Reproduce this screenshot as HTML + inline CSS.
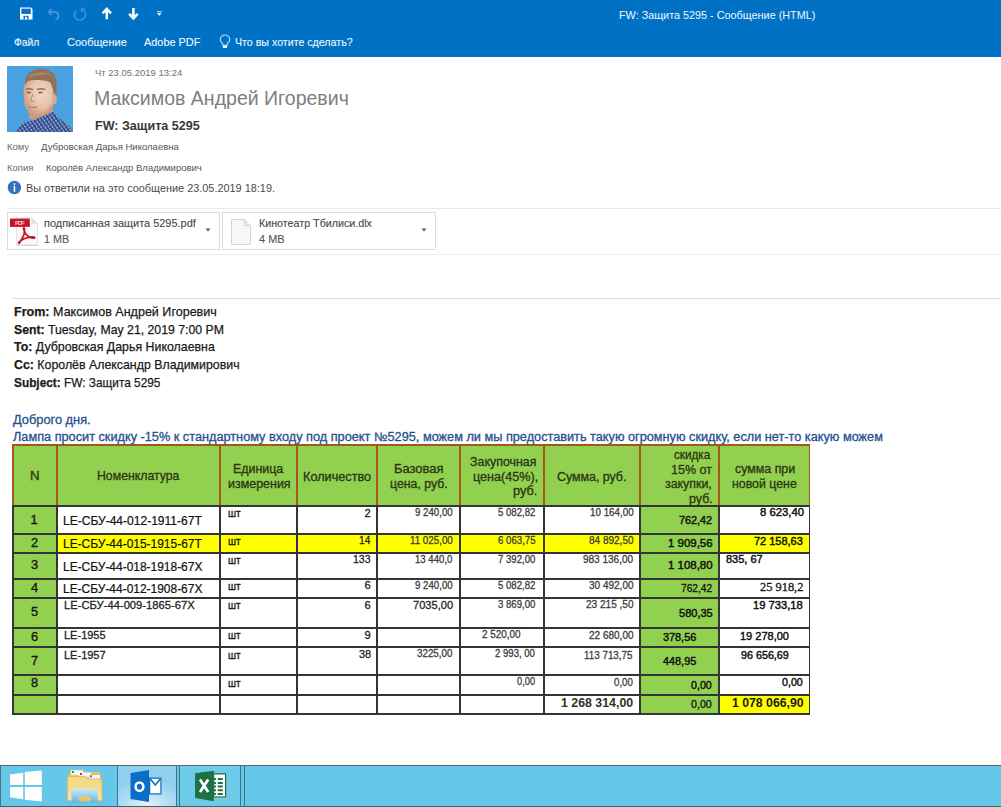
<!DOCTYPE html>
<html><head><meta charset="utf-8"><title>FW: Защита 5295</title>
<style>
html,body{margin:0;padding:0}
body{width:1001px;height:807px;overflow:hidden;position:relative;background:#ffffff;font-family:"Liberation Sans",sans-serif}
.r{position:absolute;box-sizing:content-box}
.t{position:absolute;white-space:nowrap;transform-origin:0 0}
</style></head><body>
<div class="r" style="left:0;top:0;width:1001px;height:57px;background:#0072c6"></div>
<svg class="r" style="left:0;top:0" width="180" height="28" viewBox="0 0 180 28">
<path d="M20 7.5 H31 L32.5 9 V19.5 H20 Z" fill="#ffffff"/>
<rect x="21.4" y="8.6" width="9.4" height="5.4" fill="#0a72c8"/>
<rect x="23.5" y="15.8" width="5" height="3.7" fill="#0a72c8"/>
<rect x="25" y="16.8" width="2" height="2.7" fill="#ffffff"/>
<path d="M48.5 12 L51.5 9 M48.5 12 L51.5 15 M48.5 12 H54 C57 12 58.5 14 58.5 16 C58.5 18 57 19 55.5 19.5" stroke="#4592dc" stroke-width="1.8" fill="none"/>
<path d="M76.5 11 C74.5 12.5 74 14.5 74.5 16 C75.5 19 78 20 80 20 C83 20 85.5 17.5 85.5 14.5 C85.5 11.5 83.5 9.5 81 9 M81 9 L84.5 8.2 M81 9 L82.3 12" stroke="#3f8cd8" stroke-width="1.7" fill="none"/>
<path d="M106.8 19.3 V9.5 M102.6 13.4 L106.8 8.9 L111 13.4" stroke="#ffffff" stroke-width="2.5" fill="none"/>
<path d="M133.4 8 V17.8 M129.2 13.9 L133.4 18.4 L137.6 13.9" stroke="#ffffff" stroke-width="2.5" fill="none"/>
<rect x="157" y="11.3" width="4.6" height="0.9" fill="#ffffff"/>
<path d="M157 13.2 H161.6 L159.3 15.8 Z" fill="#ffffff"/>
</svg>
<svg class="r" style="left:218px;top:34px" width="14" height="16" viewBox="0 0 14 16">
<path d="M5 11.3 L4.6 9.6 C3.2 8.6 2.3 7.2 2.3 5.6 C2.3 3 4.4 1 7 1 C9.6 1 11.7 3 11.7 5.6 C11.7 7.2 10.8 8.6 9.4 9.6 L9 11.3 Z" stroke="#b4d8f6" stroke-width="1.2" fill="none"/>
<rect x="4.9" y="11.8" width="4.2" height="2.1" fill="#ffffff"/>
</svg>
<svg class="r" style="left:7px;top:66px" width="66" height="66" viewBox="0 0 66 66">
<defs>
<radialGradient id="fg" cx="0.6" cy="0.4" r="0.65"><stop offset="0" stop-color="#f0d8c8"/><stop offset="0.6" stop-color="#e6c2aa"/><stop offset="1" stop-color="#c9987c"/></radialGradient>
<pattern id="chk" width="3.2" height="3.2" patternUnits="userSpaceOnUse" patternTransform="rotate(-35)"><rect width="3.2" height="3.2" fill="#9fb4dc"/><rect width="1.7" height="3.2" fill="#243f82" opacity="0.9"/><rect width="3.2" height="1.7" fill="#34508f" opacity="0.7"/></pattern>
</defs>
<rect width="66" height="66" fill="#4aa3e0"/>
<path d="M21 38 L22 52 C28 56 38 55 46 47 L46 36 Z" fill="#c99a80"/>
<path d="M9 66 C12 60 16 57 21 55.6 C27 54 31 52 35 50.7 C39 49 43 47 45.8 45.8 C49 48 51 50 52 52 C56 55 60 58 63 61 L66 66 Z" fill="url(#chk)"/>
<path d="M17 20 C18 14 24 12 32 12.5 C40 13 46 16 46 24 L46 34 C45 42 40 47 33 48.5 C27 49.5 22 46 19 41 C17 37 16.5 30 17 20 Z" fill="url(#fg)"/>
<path d="M17 22 C17 32 17.5 38 20 42 C22 45 25 47.5 27 48.5 C22 47 18.5 43 17.2 38 C16.5 33 16.5 27 17 22 Z" fill="#d2a88e" opacity="0.8"/>
<path d="M19 23.5 C21 22.5 24 22.8 26 23.7 M30 23.5 C32.5 22.5 36 22.5 38.5 23.8" stroke="#8a6450" stroke-width="1.4" fill="none" opacity="0.9"/>
<ellipse cx="22" cy="26.5" rx="2.3" ry="1.1" fill="#7a5646" opacity="0.85"/><ellipse cx="33.5" cy="26.5" rx="2.5" ry="1.1" fill="#7a5646" opacity="0.85"/>
<path d="M26 28 C25 31 23.5 33 24 35 C25.5 35.5 27 35.3 28 35" stroke="#c0907a" stroke-width="1.2" fill="none"/>
<path d="M21 41 C24 41.5 27 41.5 30 40.8" stroke="#b07a66" stroke-width="1.2" fill="none"/>
<path d="M45 27 C49 26 50.5 30 49.5 35 C49 38 47 39 45 38.5 Z" fill="#d9ad92"/>
<path d="M18 19 C17 10 24 3 34 2.5 C43 2.5 49 8 49.5 16 L49.5 31 C47 27 45 21 43.5 16.5 C40 14 28 13 21 15 C19.5 16 18.5 18 18 19 Z" fill="#927256"/>
<path d="M22 10 C28 5 40 5 46 10 C40 8 30 8 22 12 Z" fill="#a88a6c" opacity="0.8"/>
</svg>
<svg class="r" style="left:7px;top:180px" width="16" height="16" viewBox="0 0 16 16">
<circle cx="7.4" cy="7.5" r="6.7" fill="#3573b9"/>
<rect x="6.7" y="5.8" width="1.5" height="6" fill="#fff"/><rect x="6.7" y="3.3" width="1.5" height="1.6" fill="#fff"/>
</svg>
<div class="r" style="left:7px;top:208px;width:994px;height:1px;background:#e9e9e9"></div>
<div class="r" style="left:7px;top:212px;width:211px;height:36px;border:1px solid #dcdcdc"></div>
<div class="r" style="left:222px;top:212px;width:212px;height:36px;border:1px solid #dcdcdc"></div>
<div class="r" style="left:7px;top:254px;width:994px;height:1px;background:#ececec"></div>
<svg class="r" style="left:9px;top:216px" width="30" height="30" viewBox="0 0 30 30">
<path d="M7.5 1.8 H22.5 L28.5 7.8 V29.5 H7.5 Z" fill="#f9f9f9" stroke="#dadada" stroke-width="0.8"/>
<path d="M22.5 1.8 V7.8 H28.5 Z" fill="#e0e0e0"/>
<path d="M8 29.2 H28.5" stroke="#c8c8c8" stroke-width="0.8"/>
<rect x="1" y="2.6" width="19.8" height="8.3" fill="#c5142a"/>
<text x="10.9" y="9.2" font-family="Liberation Sans" font-size="6.2" font-weight="700" fill="#f4c4c4" text-anchor="middle" textLength="10">PDF</text>
<path d="M14.8 11.8 C15.8 11.8 15.8 16 14.8 19 C13.3 23 11 26 10.3 27 C9.7 27.8 9.2 26.8 10.3 25.8 C13 23.5 18 21 23.5 20.8 C26.5 20.8 26.5 22.6 23.5 22.1 C19.5 21.2 16.3 18 15.3 15 C14.5 13 14.3 11.8 14.8 11.8 Z" fill="none" stroke="#c5142a" stroke-width="1.8"/>
</svg>
<svg class="r" style="left:228px;top:216px" width="26" height="30" viewBox="0 0 26 30">
<path d="M3.5 3.5 H16.5 L22.5 9.5 V28.5 H3.5 Z" fill="#f7f7f7" stroke="#cfcfcf" stroke-width="0.9"/>
<path d="M16.5 3.5 V9.5 H22.5" fill="#ececec" stroke="#cfcfcf" stroke-width="0.9"/>
</svg>
<svg class="r" style="left:205px;top:228px" width="6" height="4"><path d="M0.5 0.5 H5.5 L3 3.5 Z" fill="#555"/></svg>
<svg class="r" style="left:421px;top:228px" width="6" height="4"><path d="M0.5 0.5 H5.5 L3 3.5 Z" fill="#555"/></svg>
<div class="r" style="left:13px;top:298px;width:988px;height:1px;background:#dddddd"></div>
<div class="r" style="left:12px;top:444px;width:798px;height:270px;background:#ffffff;"></div>
<div class="r" style="left:12px;top:444px;width:798px;height:62px;background:#92d050;"></div>
<div class="r" style="left:12px;top:505px;width:44px;height:209px;background:#92d050;"></div>
<div class="r" style="left:639px;top:505px;width:79px;height:209px;background:#92d050;"></div>
<div class="r" style="left:56px;top:534px;width:583px;height:19px;background:#ffff00;"></div>
<div class="r" style="left:718px;top:534px;width:91px;height:19px;background:#ffff00;"></div>
<div class="r" style="left:718px;top:694px;width:91px;height:20px;background:#ffff00;"></div>
<div class="r" style="left:12px;top:444px;width:798px;height:2px;background:#a5561a;"></div>
<div class="r" style="left:12px;top:444px;width:1.5px;height:62px;background:#a5561a;"></div>
<div class="r" style="left:55.5px;top:444px;width:2px;height:62px;background:#a5561a;"></div>
<div class="r" style="left:219px;top:444px;width:2px;height:62px;background:#a5561a;"></div>
<div class="r" style="left:295.5px;top:444px;width:2px;height:62px;background:#a5561a;"></div>
<div class="r" style="left:376px;top:444px;width:2px;height:62px;background:#a5561a;"></div>
<div class="r" style="left:458.5px;top:444px;width:2px;height:62px;background:#a5561a;"></div>
<div class="r" style="left:542.5px;top:444px;width:2px;height:62px;background:#a5561a;"></div>
<div class="r" style="left:638.5px;top:444px;width:2px;height:62px;background:#a5561a;"></div>
<div class="r" style="left:717.5px;top:444px;width:2px;height:62px;background:#a5561a;"></div>
<div class="r" style="left:808.5px;top:444px;width:1.5px;height:62px;background:#a5561a;"></div>
<div class="r" style="left:12px;top:505px;width:798px;height:2px;background:#353535;"></div>
<div class="r" style="left:12px;top:533px;width:798px;height:2px;background:#353535;"></div>
<div class="r" style="left:12px;top:551.5px;width:798px;height:2px;background:#353535;"></div>
<div class="r" style="left:12px;top:577.5px;width:798px;height:2px;background:#353535;"></div>
<div class="r" style="left:12px;top:597px;width:798px;height:2px;background:#353535;"></div>
<div class="r" style="left:12px;top:627px;width:798px;height:2px;background:#353535;"></div>
<div class="r" style="left:12px;top:646px;width:798px;height:2px;background:#353535;"></div>
<div class="r" style="left:12px;top:674px;width:798px;height:2px;background:#353535;"></div>
<div class="r" style="left:12px;top:693.5px;width:798px;height:2px;background:#353535;"></div>
<div class="r" style="left:12px;top:713px;width:798px;height:2px;background:#353535;"></div>
<div class="r" style="left:12px;top:505px;width:1.5px;height:210px;background:#353535;"></div>
<div class="r" style="left:55.5px;top:505px;width:2px;height:210px;background:#353535;"></div>
<div class="r" style="left:219px;top:505px;width:2px;height:210px;background:#353535;"></div>
<div class="r" style="left:295.5px;top:505px;width:2px;height:210px;background:#353535;"></div>
<div class="r" style="left:376px;top:505px;width:2px;height:210px;background:#353535;"></div>
<div class="r" style="left:458.5px;top:505px;width:2px;height:210px;background:#353535;"></div>
<div class="r" style="left:542.5px;top:505px;width:2px;height:210px;background:#353535;"></div>
<div class="r" style="left:638.5px;top:505px;width:2px;height:210px;background:#353535;"></div>
<div class="r" style="left:717.5px;top:505px;width:2px;height:210px;background:#353535;"></div>
<div class="r" style="left:808.5px;top:505px;width:1.5px;height:210px;background:#353535;"></div>
<div class="r" style="left:0;top:765px;width:1001px;height:42px;background:#65c8e8"></div>
<div class="r" style="left:0;top:765px;width:1001px;height:1px;background:#5a6a72"></div>
<div class="r" style="left:0;top:766px;width:1px;height:41px;background:#4f6f7d"></div>
<div class="r" style="left:0;top:806px;width:1001px;height:1px;background:#3f5f6d"></div>
<svg class="r" style="left:8px;top:768px" width="38" height="36" viewBox="0 0 38 36">
<path d="M2.1 6.4 L15.2 4.8 V17 H2.1 Z M16.8 4 L33.8 2.4 V17 H16.8 Z M2.1 18.9 H15.2 V31.2 L2.1 29.3 Z M16.8 18.9 H33.8 V33.6 L16.8 31.7 Z" fill="#ffffff"/>
</svg>
<svg class="r" style="left:66px;top:768px" width="38" height="36" viewBox="0 0 38 36">
<defs><linearGradient id="tray" x1="0" y1="0" x2="0" y2="1"><stop offset="0" stop-color="#c8ecfa"/><stop offset="1" stop-color="#6ab2e2"/></linearGradient>
<linearGradient id="fold" x1="0" y1="0" x2="0" y2="1"><stop offset="0" stop-color="#f3d77e"/><stop offset="1" stop-color="#f7e4a0"/></linearGradient></defs>
<path d="M3 9 L4 2 H17 L18 4 H34 L35 9 Z" fill="#e7bf55"/>
<rect x="5" y="2.2" width="12" height="5" fill="#f6f6f6"/><rect x="6" y="3" width="2" height="2" fill="#2e9a3a"/>
<rect x="13" y="4.5" width="12" height="5" fill="#f6f6f6"/><rect x="14" y="5" width="2" height="2" fill="#d42a2a"/>
<rect x="23" y="7" width="11" height="4" fill="#f6f6f6"/><rect x="23.8" y="7.3" width="2" height="2" fill="#2a66d4"/>
<path d="M1.5 8.5 H20 L22 11 H36 V32.8 H1.5 Z" fill="url(#fold)" stroke="#e3b648" stroke-width="0.8"/>
<path d="M5.5 21 H31.8 V34.4 H24.4 V29.3 H13.2 V34.4 H5.5 Z" fill="url(#tray)"/>
<rect x="13.2" y="29.3" width="11.2" height="3.5" fill="#f1c44e"/>
</svg>
<div class="r" style="left:117px;top:766px;width:60px;height:40px;background:radial-gradient(ellipse 70% 60% at 50% 95%, #e4f4fb 0%, #b4def3 50%, #92cfee 100%)"></div>
<div class="r" style="left:117px;top:766px;width:1px;height:40px;background:#44748a"></div>
<div class="r" style="left:176px;top:766px;width:1px;height:40px;background:#44748a"></div>
<div class="r" style="left:179px;top:766px;width:1px;height:40px;background:#44748a"></div>
<div class="r" style="left:180px;top:766px;width:60px;height:40px;background:#6fcbea"></div>
<div class="r" style="left:240px;top:766px;width:1px;height:40px;background:#44748a"></div>
<div class="r" style="left:244px;top:766px;width:1px;height:40px;background:#44748a"></div>
<svg class="r" style="left:128px;top:768px" width="36" height="36" viewBox="0 0 36 36">
<path d="M2.5 5 L21 2 V34 L2.5 31 Z" fill="#0a6fc9"/>
<ellipse cx="11.5" cy="18.7" rx="3.9" ry="4.3" fill="none" stroke="#fff" stroke-width="2.5"/>
<rect x="21" y="9.5" width="12.5" height="17" fill="#0a6fc9"/>
<rect x="22.3" y="10.8" width="10" height="14.5" fill="#fff"/>
<path d="M22.3 11 L27.3 17 L32.3 11" stroke="#0a6fc9" stroke-width="1.6" fill="none"/>
</svg>
<svg class="r" style="left:193px;top:768px" width="36" height="36" viewBox="0 0 36 36">
<rect x="20" y="5.3" width="13.2" height="24.3" rx="1" fill="#1e7145"/>
<rect x="21.2" y="6.5" width="10.8" height="21.9" fill="#ffffff"/>
<path d="M20.8 11.1 H22.9 M24.8 11.1 H29.8 M20.8 14.9 H22.9 M24.8 14.9 H29.8 M20.8 18.6 H22.9 M24.8 18.6 H29.8 M20.8 22.3 H22.9 M24.8 22.3 H29.8 M20.8 26.1 H22.9 M24.8 26.1 H29.8" stroke="#1e7145" stroke-width="2"/>
<path d="M2.1 5.3 L20.8 2.7 V33.3 L2.1 30.1 Z" fill="#1e7145"/>
<path d="M7 11.5 L15.2 24 M15.2 11.5 L7 24" stroke="#ffffff" stroke-width="2.7"/>
</svg>
<div class="t" style="left:619.04px;top:9.93px;font-size:11.30px;line-height:11.30px;font-weight:400;color:#f0f6fc;font-family:'Liberation Sans', sans-serif;transform:scaleX(0.9583);">FW: Защита 5295 - Сообщение (HTML)</div>
<div class="t" style="left:14.40px;top:36.83px;font-size:11.30px;line-height:11.30px;font-weight:400;color:#f2f7fc;font-family:'Liberation Sans', sans-serif;transform:scaleX(0.9143);-webkit-text-stroke:0.1px #f2f7fc;">Файл</div>
<div class="t" style="left:66.50px;top:36.83px;font-size:11.30px;line-height:11.30px;font-weight:400;color:#f2f7fc;font-family:'Liberation Sans', sans-serif;transform:scaleX(0.9726);-webkit-text-stroke:0.1px #f2f7fc;">Сообщение</div>
<div class="t" style="left:144.40px;top:36.83px;font-size:11.30px;line-height:11.30px;font-weight:400;color:#f2f7fc;font-family:'Liberation Sans', sans-serif;transform:scaleX(0.9655);-webkit-text-stroke:0.1px #f2f7fc;">Adobe PDF</div>
<div class="t" style="left:235.00px;top:36.83px;font-size:11.30px;line-height:11.30px;font-weight:400;color:#f2f7fc;font-family:'Liberation Sans', sans-serif;transform:scaleX(0.9416);-webkit-text-stroke:0.1px #f2f7fc;">Что вы хотите сделать?</div>
<div class="t" style="left:94.50px;top:68.75px;font-size:8.80px;line-height:8.80px;font-weight:400;color:#707070;font-family:'Liberation Sans', sans-serif;transform:scaleX(1.0802);">Чт 23.05.2019 13:24</div>
<div class="t" style="left:93.56px;top:88.19px;font-size:20.80px;line-height:20.80px;font-weight:400;color:#7e7e7e;font-family:'Liberation Sans', sans-serif;transform:scaleX(0.9387);">Максимов Андрей Игоревич</div>
<div class="t" style="left:94.50px;top:119.67px;font-size:12.20px;line-height:12.20px;font-weight:700;color:#383838;font-family:'Liberation Sans', sans-serif;transform:scaleX(1.0314);">FW: Защита 5295</div>
<div class="t" style="left:7.00px;top:142.88px;font-size:9.00px;line-height:9.00px;font-weight:400;color:#6a6a6a;font-family:'Liberation Sans', sans-serif;transform:scaleX(1.0476);">Кому</div>
<div class="t" style="left:40.50px;top:143.38px;font-size:9.00px;line-height:9.00px;font-weight:400;color:#555555;font-family:'Liberation Sans', sans-serif;transform:scaleX(1.0573);">Дубровская Дарья Николаевна</div>
<div class="t" style="left:7.00px;top:163.58px;font-size:9.00px;line-height:9.00px;font-weight:400;color:#6a6a6a;font-family:'Liberation Sans', sans-serif;transform:scaleX(1.0520);">Копия</div>
<div class="t" style="left:45.60px;top:163.58px;font-size:9.00px;line-height:9.00px;font-weight:400;color:#555555;font-family:'Liberation Sans', sans-serif;transform:scaleX(1.0571);">Королёв Александр Владимирович</div>
<div class="t" style="left:25.50px;top:183.94px;font-size:10.00px;line-height:10.00px;font-weight:400;color:#4a4a4a;font-family:'Liberation Sans', sans-serif;transform:scaleX(1.0890);">Вы ответили на это сообщение 23.05.2019 18:19.</div>
<div class="t" style="left:43.70px;top:219.20px;font-size:10.40px;line-height:10.40px;font-weight:400;color:#454545;font-family:'Liberation Sans', sans-serif;transform:scaleX(1.0538);-webkit-text-stroke:0.1px #454545;">подписанная защита 5295.pdf</div>
<div class="t" style="left:43.60px;top:234.50px;font-size:10.40px;line-height:10.40px;font-weight:400;color:#565656;font-family:'Liberation Sans', sans-serif;transform:scaleX(1.0333);-webkit-text-stroke:0.1px #565656;">1 MB</div>
<div class="t" style="left:259.40px;top:219.20px;font-size:10.40px;line-height:10.40px;font-weight:400;color:#454545;font-family:'Liberation Sans', sans-serif;transform:scaleX(1.0300);-webkit-text-stroke:0.1px #454545;">Кинотеатр Тбилиси.dlx</div>
<div class="t" style="left:259.40px;top:234.50px;font-size:10.40px;line-height:10.40px;font-weight:400;color:#565656;font-family:'Liberation Sans', sans-serif;transform:scaleX(1.0542);-webkit-text-stroke:0.1px #565656;">4 MB</div>
<div class="t" style="left:13.60px;top:305.20px;font-size:13.00px;line-height:13.00px;font-weight:400;color:#1a1a1a;font-family:'Liberation Sans', sans-serif;transform:scaleX(0.9652);-webkit-text-stroke:0.25px #1a1a1a;"><b>From:</b> Максимов Андрей Игоревич</div>
<div class="t" style="left:13.60px;top:322.70px;font-size:13.00px;line-height:13.00px;font-weight:400;color:#1a1a1a;font-family:'Liberation Sans', sans-serif;transform:scaleX(0.9446);-webkit-text-stroke:0.25px #1a1a1a;"><b>Sent:</b> Tuesday, May 21, 2019 7:00 PM</div>
<div class="t" style="left:13.60px;top:340.20px;font-size:13.00px;line-height:13.00px;font-weight:400;color:#1a1a1a;font-family:'Liberation Sans', sans-serif;transform:scaleX(0.9512);-webkit-text-stroke:0.25px #1a1a1a;"><b>To:</b> Дубровская Дарья Николаевна</div>
<div class="t" style="left:13.60px;top:357.70px;font-size:13.00px;line-height:13.00px;font-weight:400;color:#1a1a1a;font-family:'Liberation Sans', sans-serif;transform:scaleX(0.9502);-webkit-text-stroke:0.25px #1a1a1a;"><b>Cc:</b> Королёв Александр Владимирович</div>
<div class="t" style="left:13.60px;top:375.80px;font-size:13.00px;line-height:13.00px;font-weight:400;color:#1a1a1a;font-family:'Liberation Sans', sans-serif;transform:scaleX(0.9112);-webkit-text-stroke:0.25px #1a1a1a;"><b>Subject:</b> FW: Защита 5295</div>
<div class="t" style="left:13.40px;top:413.53px;font-size:12.60px;line-height:12.60px;font-weight:400;color:#27508f;font-family:'Liberation Sans', sans-serif;transform:scaleX(1.0171);-webkit-text-stroke:0.3px #27508f;">Доброго дня.</div>
<div class="t" style="left:13.00px;top:430.84px;font-size:12.00px;line-height:12.00px;font-weight:400;color:#27508f;font-family:'Liberation Sans', sans-serif;transform:scaleX(1.0598);-webkit-text-stroke:0.3px #27508f;">Лампа просит скидку -15% к стандартному входу под проект №5295, можем ли мы предоставить такую огромную скидку, если нет-то какую можем</div>
<div class="t" style="left:29.73px;top:469.90px;font-size:12.40px;line-height:12.40px;font-weight:400;color:#2c3510;font-family:'Liberation Sans', sans-serif;transform:scaleX(1.0714);-webkit-text-stroke:0.3px #2c3510;">N</div>
<div class="t" style="left:96.71px;top:469.90px;font-size:12.40px;line-height:12.40px;font-weight:400;color:#2c3510;font-family:'Liberation Sans', sans-serif;transform:scaleX(0.9916);-webkit-text-stroke:0.3px #2c3510;">Номенклатура</div>
<div class="t" style="left:232.87px;top:462.94px;font-size:12.00px;line-height:12.00px;font-weight:400;color:#2c3510;font-family:'Liberation Sans', sans-serif;transform:scaleX(1.0333);-webkit-text-stroke:0.3px #2c3510;">Единица</div>
<div class="t" style="left:227.70px;top:478.24px;font-size:12.00px;line-height:12.00px;font-weight:400;color:#2c3510;font-family:'Liberation Sans', sans-serif;transform:scaleX(1.0383);-webkit-text-stroke:0.3px #2c3510;">измерения</div>
<div class="t" style="left:302.94px;top:470.64px;font-size:12.00px;line-height:12.00px;font-weight:400;color:#2c3510;font-family:'Liberation Sans', sans-serif;transform:scaleX(1.0571);-webkit-text-stroke:0.3px #2c3510;">Количество</div>
<div class="t" style="left:393.92px;top:462.94px;font-size:12.00px;line-height:12.00px;font-weight:400;color:#2c3510;font-family:'Liberation Sans', sans-serif;transform:scaleX(1.0795);-webkit-text-stroke:0.3px #2c3510;">Базовая</div>
<div class="t" style="left:389.80px;top:478.24px;font-size:12.00px;line-height:12.00px;font-weight:400;color:#2c3510;font-family:'Liberation Sans', sans-serif;transform:scaleX(1.0268);-webkit-text-stroke:0.3px #2c3510;">цена, руб.</div>
<div class="t" style="left:470.40px;top:456.44px;font-size:12.00px;line-height:12.00px;font-weight:400;color:#2c3510;font-family:'Liberation Sans', sans-serif;transform:scaleX(1.0344);-webkit-text-stroke:0.3px #2c3510;">Закупочная</div>
<div class="t" style="left:472.50px;top:471.14px;font-size:12.00px;line-height:12.00px;font-weight:400;color:#2c3510;font-family:'Liberation Sans', sans-serif;transform:scaleX(1.0508);-webkit-text-stroke:0.3px #2c3510;">цена(45%),</div>
<div class="t" style="left:513.20px;top:485.44px;font-size:12.00px;line-height:12.00px;font-weight:400;color:#2c3510;font-family:'Liberation Sans', sans-serif;transform:scaleX(1.0636);-webkit-text-stroke:0.3px #2c3510;">руб.</div>
<div class="t" style="left:556.60px;top:470.64px;font-size:12.00px;line-height:12.00px;font-weight:400;color:#2c3510;font-family:'Liberation Sans', sans-serif;transform:scaleX(1.0313);-webkit-text-stroke:0.3px #2c3510;">Сумма, руб.</div>
<div class="t" style="left:674.30px;top:448.94px;font-size:12.00px;line-height:12.00px;font-weight:400;color:#2c3510;font-family:'Liberation Sans', sans-serif;transform:scaleX(0.9763);-webkit-text-stroke:0.3px #2c3510;">скидка</div>
<div class="t" style="left:670.66px;top:463.64px;font-size:12.00px;line-height:12.00px;font-weight:400;color:#2c3510;font-family:'Liberation Sans', sans-serif;transform:scaleX(1.0447);-webkit-text-stroke:0.3px #2c3510;">15% от</div>
<div class="t" style="left:665.00px;top:478.44px;font-size:12.00px;line-height:12.00px;font-weight:400;color:#2c3510;font-family:'Liberation Sans', sans-serif;transform:scaleX(1.0311);-webkit-text-stroke:0.3px #2c3510;">закупки,</div>
<div class="t" style="left:688.60px;top:492.94px;font-size:12.00px;line-height:12.00px;font-weight:400;color:#2c3510;font-family:'Liberation Sans', sans-serif;transform:scaleX(1.0364);-webkit-text-stroke:0.3px #2c3510;">руб.</div>
<div class="t" style="left:734.60px;top:462.64px;font-size:12.00px;line-height:12.00px;font-weight:400;color:#2c3510;font-family:'Liberation Sans', sans-serif;transform:scaleX(1.0328);-webkit-text-stroke:0.3px #2c3510;">сумма при</div>
<div class="t" style="left:732.20px;top:477.64px;font-size:12.00px;line-height:12.00px;font-weight:400;color:#2c3510;font-family:'Liberation Sans', sans-serif;transform:scaleX(1.0286);-webkit-text-stroke:0.3px #2c3510;">новой цене</div>
<div class="t" style="left:30.60px;top:513.96px;font-size:12.80px;line-height:12.80px;font-weight:400;color:#151515;font-family:'Liberation Sans', sans-serif;-webkit-text-stroke:0.35px #151515;">1</div>
<div class="t" style="left:31.10px;top:536.96px;font-size:12.80px;line-height:12.80px;font-weight:400;color:#151515;font-family:'Liberation Sans', sans-serif;-webkit-text-stroke:0.35px #151515;">2</div>
<div class="t" style="left:31.10px;top:558.96px;font-size:12.80px;line-height:12.80px;font-weight:400;color:#151515;font-family:'Liberation Sans', sans-serif;-webkit-text-stroke:0.35px #151515;">3</div>
<div class="t" style="left:31.10px;top:581.56px;font-size:12.80px;line-height:12.80px;font-weight:400;color:#151515;font-family:'Liberation Sans', sans-serif;-webkit-text-stroke:0.35px #151515;">4</div>
<div class="t" style="left:31.10px;top:605.76px;font-size:12.80px;line-height:12.80px;font-weight:400;color:#151515;font-family:'Liberation Sans', sans-serif;-webkit-text-stroke:0.35px #151515;">5</div>
<div class="t" style="left:31.10px;top:631.06px;font-size:12.80px;line-height:12.80px;font-weight:400;color:#151515;font-family:'Liberation Sans', sans-serif;-webkit-text-stroke:0.35px #151515;">6</div>
<div class="t" style="left:31.10px;top:655.16px;font-size:12.80px;line-height:12.80px;font-weight:400;color:#151515;font-family:'Liberation Sans', sans-serif;-webkit-text-stroke:0.35px #151515;">7</div>
<div class="t" style="left:31.10px;top:677.36px;font-size:12.80px;line-height:12.80px;font-weight:400;color:#151515;font-family:'Liberation Sans', sans-serif;-webkit-text-stroke:0.35px #151515;">8</div>
<div class="t" style="left:62.77px;top:514.00px;font-size:13.00px;line-height:13.00px;font-weight:400;color:#111111;font-family:'Liberation Sans', sans-serif;transform:scaleX(0.9255);-webkit-text-stroke:0.22px #111111;">LE-СБУ-44-012-1911-67T</div>
<div class="t" style="left:62.78px;top:537.00px;font-size:13.00px;line-height:13.00px;font-weight:400;color:#111111;font-family:'Liberation Sans', sans-serif;transform:scaleX(0.9193);-webkit-text-stroke:0.22px #111111;">LE-СБУ-44-015-1915-67T</div>
<div class="t" style="left:62.78px;top:559.50px;font-size:13.00px;line-height:13.00px;font-weight:400;color:#111111;font-family:'Liberation Sans', sans-serif;transform:scaleX(0.9192);-webkit-text-stroke:0.22px #111111;">LE-СБУ-44-018-1918-67X</div>
<div class="t" style="left:62.78px;top:582.00px;font-size:13.00px;line-height:13.00px;font-weight:400;color:#111111;font-family:'Liberation Sans', sans-serif;transform:scaleX(0.9192);-webkit-text-stroke:0.22px #111111;">LE-СБУ-44-012-1908-67X</div>
<div class="t" style="left:63.70px;top:600.36px;font-size:10.80px;line-height:10.80px;font-weight:400;color:#222222;font-family:'Liberation Sans', sans-serif;transform:scaleX(1.0373);-webkit-text-stroke:0.28px #222222;">LE-СБУ-44-009-1865-67X</div>
<div class="t" style="left:63.70px;top:630.36px;font-size:10.80px;line-height:10.80px;font-weight:400;color:#222222;font-family:'Liberation Sans', sans-serif;transform:scaleX(1.0195);-webkit-text-stroke:0.28px #222222;">LE-1955</div>
<div class="t" style="left:63.70px;top:649.56px;font-size:10.80px;line-height:10.80px;font-weight:400;color:#222222;font-family:'Liberation Sans', sans-serif;transform:scaleX(1.0195);-webkit-text-stroke:0.28px #222222;">LE-1957</div>
<div class="t" style="left:227.50px;top:508.36px;font-size:10.80px;line-height:10.80px;font-weight:400;color:#1a1a1a;font-family:'Liberation Sans', sans-serif;transform:scaleX(0.9286);-webkit-text-stroke:0.35px #1a1a1a;">шт</div>
<div class="t" style="left:227.50px;top:535.86px;font-size:10.80px;line-height:10.80px;font-weight:400;color:#1a1a1a;font-family:'Liberation Sans', sans-serif;transform:scaleX(0.9286);-webkit-text-stroke:0.35px #1a1a1a;">шт</div>
<div class="t" style="left:227.50px;top:555.36px;font-size:10.80px;line-height:10.80px;font-weight:400;color:#1a1a1a;font-family:'Liberation Sans', sans-serif;transform:scaleX(0.9286);-webkit-text-stroke:0.35px #1a1a1a;">шт</div>
<div class="t" style="left:227.50px;top:581.36px;font-size:10.80px;line-height:10.80px;font-weight:400;color:#1a1a1a;font-family:'Liberation Sans', sans-serif;transform:scaleX(0.9286);-webkit-text-stroke:0.35px #1a1a1a;">шт</div>
<div class="t" style="left:227.50px;top:600.36px;font-size:10.80px;line-height:10.80px;font-weight:400;color:#1a1a1a;font-family:'Liberation Sans', sans-serif;transform:scaleX(0.9286);-webkit-text-stroke:0.35px #1a1a1a;">шт</div>
<div class="t" style="left:227.50px;top:630.36px;font-size:10.80px;line-height:10.80px;font-weight:400;color:#1a1a1a;font-family:'Liberation Sans', sans-serif;transform:scaleX(0.9286);-webkit-text-stroke:0.35px #1a1a1a;">шт</div>
<div class="t" style="left:227.50px;top:650.36px;font-size:10.80px;line-height:10.80px;font-weight:400;color:#1a1a1a;font-family:'Liberation Sans', sans-serif;transform:scaleX(0.9286);-webkit-text-stroke:0.35px #1a1a1a;">шт</div>
<div class="t" style="left:227.50px;top:677.86px;font-size:10.80px;line-height:10.80px;font-weight:400;color:#1a1a1a;font-family:'Liberation Sans', sans-serif;transform:scaleX(0.9286);-webkit-text-stroke:0.35px #1a1a1a;">шт</div>
<div class="t" style="left:364.50px;top:507.52px;font-size:11.20px;line-height:11.20px;font-weight:400;color:#222222;font-family:'Liberation Sans', sans-serif;-webkit-text-stroke:0.28px #222222;">2</div>
<div class="t" style="left:358.69px;top:535.22px;font-size:11.20px;line-height:11.20px;font-weight:400;color:#222222;font-family:'Liberation Sans', sans-serif;transform:scaleX(0.9083);-webkit-text-stroke:0.28px #222222;">14</div>
<div class="t" style="left:352.66px;top:554.12px;font-size:11.20px;line-height:11.20px;font-weight:400;color:#222222;font-family:'Liberation Sans', sans-serif;transform:scaleX(0.9389);-webkit-text-stroke:0.28px #222222;">133</div>
<div class="t" style="left:364.50px;top:580.12px;font-size:11.20px;line-height:11.20px;font-weight:400;color:#222222;font-family:'Liberation Sans', sans-serif;-webkit-text-stroke:0.28px #222222;">6</div>
<div class="t" style="left:364.50px;top:599.82px;font-size:11.20px;line-height:11.20px;font-weight:400;color:#222222;font-family:'Liberation Sans', sans-serif;-webkit-text-stroke:0.28px #222222;">6</div>
<div class="t" style="left:364.50px;top:629.52px;font-size:11.20px;line-height:11.20px;font-weight:400;color:#222222;font-family:'Liberation Sans', sans-serif;-webkit-text-stroke:0.28px #222222;">9</div>
<div class="t" style="left:358.80px;top:649.12px;font-size:11.20px;line-height:11.20px;font-weight:400;color:#222222;font-family:'Liberation Sans', sans-serif;transform:scaleX(0.9750);-webkit-text-stroke:0.28px #222222;">38</div>
<div class="t" style="left:415.00px;top:507.14px;font-size:10.70px;line-height:10.70px;font-weight:400;color:#3a3a3a;font-family:'Liberation Sans', sans-serif;transform:scaleX(0.9048);-webkit-text-stroke:0.28px #3a3a3a;">9 240,00</div>
<div class="t" style="left:410.00px;top:534.54px;font-size:10.70px;line-height:10.70px;font-weight:400;color:#3a3a3a;font-family:'Liberation Sans', sans-serif;transform:scaleX(0.9149);-webkit-text-stroke:0.28px #3a3a3a;">11 025,00</div>
<div class="t" style="left:415.20px;top:553.84px;font-size:10.70px;line-height:10.70px;font-weight:400;color:#3a3a3a;font-family:'Liberation Sans', sans-serif;transform:scaleX(0.9000);-webkit-text-stroke:0.28px #3a3a3a;">13 440,0</div>
<div class="t" style="left:415.00px;top:579.74px;font-size:10.70px;line-height:10.70px;font-weight:400;color:#3a3a3a;font-family:'Liberation Sans', sans-serif;transform:scaleX(0.9048);-webkit-text-stroke:0.28px #3a3a3a;">9 240,00</div>
<div class="t" style="left:413.40px;top:599.82px;font-size:11.20px;line-height:11.20px;font-weight:400;color:#1e1e1e;font-family:'Liberation Sans', sans-serif;transform:scaleX(0.9900);-webkit-text-stroke:0.28px #1e1e1e;">7035,00</div>
<div class="t" style="left:417.30px;top:648.24px;font-size:10.70px;line-height:10.70px;font-weight:400;color:#3a3a3a;font-family:'Liberation Sans', sans-serif;transform:scaleX(0.9154);-webkit-text-stroke:0.28px #3a3a3a;">3225,00</div>
<div class="t" style="left:497.80px;top:507.14px;font-size:10.70px;line-height:10.70px;font-weight:400;color:#3a3a3a;font-family:'Liberation Sans', sans-serif;transform:scaleX(0.8976);-webkit-text-stroke:0.28px #3a3a3a;">5 082,82</div>
<div class="t" style="left:497.60px;top:534.54px;font-size:10.70px;line-height:10.70px;font-weight:400;color:#3a3a3a;font-family:'Liberation Sans', sans-serif;transform:scaleX(0.9024);-webkit-text-stroke:0.28px #3a3a3a;">6 063,75</div>
<div class="t" style="left:497.80px;top:553.84px;font-size:10.70px;line-height:10.70px;font-weight:400;color:#3a3a3a;font-family:'Liberation Sans', sans-serif;transform:scaleX(0.8976);-webkit-text-stroke:0.28px #3a3a3a;">7 392,00</div>
<div class="t" style="left:497.80px;top:579.74px;font-size:10.70px;line-height:10.70px;font-weight:400;color:#3a3a3a;font-family:'Liberation Sans', sans-serif;transform:scaleX(0.8976);-webkit-text-stroke:0.28px #3a3a3a;">5 082,82</div>
<div class="t" style="left:497.80px;top:598.94px;font-size:10.70px;line-height:10.70px;font-weight:400;color:#3a3a3a;font-family:'Liberation Sans', sans-serif;transform:scaleX(0.8976);-webkit-text-stroke:0.28px #3a3a3a;">3 869,00</div>
<div class="t" style="left:481.70px;top:628.84px;font-size:10.70px;line-height:10.70px;font-weight:400;color:#3a3a3a;font-family:'Liberation Sans', sans-serif;transform:scaleX(0.9262);-webkit-text-stroke:0.28px #3a3a3a;">2 520,00</div>
<div class="t" style="left:495.20px;top:648.24px;font-size:10.70px;line-height:10.70px;font-weight:400;color:#3a3a3a;font-family:'Liberation Sans', sans-serif;transform:scaleX(0.8956);-webkit-text-stroke:0.28px #3a3a3a;">2 993, 00</div>
<div class="t" style="left:517.30px;top:675.54px;font-size:10.70px;line-height:10.70px;font-weight:400;color:#3a3a3a;font-family:'Liberation Sans', sans-serif;transform:scaleX(0.8667);-webkit-text-stroke:0.28px #3a3a3a;">0,00</div>
<div class="t" style="left:589.80px;top:506.74px;font-size:10.70px;line-height:10.70px;font-weight:400;color:#3a3a3a;font-family:'Liberation Sans', sans-serif;transform:scaleX(0.9191);-webkit-text-stroke:0.28px #3a3a3a;">10 164,00</div>
<div class="t" style="left:589.00px;top:535.14px;font-size:10.70px;line-height:10.70px;font-weight:400;color:#3a3a3a;font-family:'Liberation Sans', sans-serif;transform:scaleX(0.9362);-webkit-text-stroke:0.28px #3a3a3a;">84 892,50</div>
<div class="t" style="left:583.40px;top:554.34px;font-size:10.70px;line-height:10.70px;font-weight:400;color:#3a3a3a;font-family:'Liberation Sans', sans-serif;transform:scaleX(0.9358);-webkit-text-stroke:0.28px #3a3a3a;">983 136,00</div>
<div class="t" style="left:589.00px;top:580.34px;font-size:10.70px;line-height:10.70px;font-weight:400;color:#3a3a3a;font-family:'Liberation Sans', sans-serif;transform:scaleX(0.9362);-webkit-text-stroke:0.28px #3a3a3a;">30 492,00</div>
<div class="t" style="left:586.00px;top:599.34px;font-size:10.70px;line-height:10.70px;font-weight:400;color:#3a3a3a;font-family:'Liberation Sans', sans-serif;transform:scaleX(0.9400);-webkit-text-stroke:0.28px #3a3a3a;">23 215 ,50</div>
<div class="t" style="left:589.00px;top:630.14px;font-size:10.70px;line-height:10.70px;font-weight:400;color:#3a3a3a;font-family:'Liberation Sans', sans-serif;transform:scaleX(0.9362);-webkit-text-stroke:0.28px #3a3a3a;">22 680,00</div>
<div class="t" style="left:584.20px;top:649.74px;font-size:10.70px;line-height:10.70px;font-weight:400;color:#3a3a3a;font-family:'Liberation Sans', sans-serif;transform:scaleX(0.9208);-webkit-text-stroke:0.28px #3a3a3a;">113 713,75</div>
<div class="t" style="left:614.00px;top:676.64px;font-size:10.70px;line-height:10.70px;font-weight:400;color:#3a3a3a;font-family:'Liberation Sans', sans-serif;transform:scaleX(0.9048);-webkit-text-stroke:0.28px #3a3a3a;">0,00</div>
<div class="t" style="left:561.00px;top:696.97px;font-size:12.20px;line-height:12.20px;font-weight:700;color:#33331a;font-family:'Liberation Sans', sans-serif;transform:scaleX(1.0141);">1 268 314,00</div>
<div class="t" style="left:678.70px;top:514.52px;font-size:11.20px;line-height:11.20px;font-weight:400;color:#111111;font-family:'Liberation Sans', sans-serif;transform:scaleX(0.9676);-webkit-text-stroke:0.45px #111111;">762,42</div>
<div class="t" style="left:667.98px;top:538.12px;font-size:11.20px;line-height:11.20px;font-weight:400;color:#111111;font-family:'Liberation Sans', sans-serif;transform:scaleX(1.0238);-webkit-text-stroke:0.45px #111111;">1 909,56</div>
<div class="t" style="left:667.98px;top:559.92px;font-size:11.20px;line-height:11.20px;font-weight:400;color:#111111;font-family:'Liberation Sans', sans-serif;transform:scaleX(1.0238);-webkit-text-stroke:0.45px #111111;">1 108,80</div>
<div class="t" style="left:681.00px;top:582.82px;font-size:11.20px;line-height:11.20px;font-weight:400;color:#111111;font-family:'Liberation Sans', sans-serif;transform:scaleX(0.9118);-webkit-text-stroke:0.3px #111111;">762,42</div>
<div class="t" style="left:678.50px;top:608.02px;font-size:11.20px;line-height:11.20px;font-weight:400;color:#111111;font-family:'Liberation Sans', sans-serif;transform:scaleX(0.9853);-webkit-text-stroke:0.45px #111111;">580,35</div>
<div class="t" style="left:663.00px;top:631.52px;font-size:11.20px;line-height:11.20px;font-weight:400;color:#111111;font-family:'Liberation Sans', sans-serif;transform:scaleX(0.9706);-webkit-text-stroke:0.45px #111111;">378,56</div>
<div class="t" style="left:663.00px;top:655.52px;font-size:11.20px;line-height:11.20px;font-weight:400;color:#111111;font-family:'Liberation Sans', sans-serif;transform:scaleX(0.9706);-webkit-text-stroke:0.45px #111111;">448,95</div>
<div class="t" style="left:691.00px;top:679.82px;font-size:11.20px;line-height:11.20px;font-weight:400;color:#111111;font-family:'Liberation Sans', sans-serif;transform:scaleX(0.9545);-webkit-text-stroke:0.45px #111111;">0,00</div>
<div class="t" style="left:691.00px;top:698.82px;font-size:11.20px;line-height:11.20px;font-weight:400;color:#111111;font-family:'Liberation Sans', sans-serif;transform:scaleX(0.9545);-webkit-text-stroke:0.3px #111111;">0,00</div>
<div class="t" style="left:759.60px;top:507.32px;font-size:11.20px;line-height:11.20px;font-weight:400;color:#111111;font-family:'Liberation Sans', sans-serif;transform:scaleX(1.0093);-webkit-text-stroke:0.45px #111111;">8 623,40</div>
<div class="t" style="left:754.00px;top:535.82px;font-size:11.20px;line-height:11.20px;font-weight:400;color:#111111;font-family:'Liberation Sans', sans-serif;transform:scaleX(0.9800);-webkit-text-stroke:0.45px #111111;">72 158,63</div>
<div class="t" style="left:753.00px;top:599.52px;font-size:11.20px;line-height:11.20px;font-weight:400;color:#111111;font-family:'Liberation Sans', sans-serif;-webkit-text-stroke:0.45px #111111;">19 733,18</div>
<div class="t" style="left:739.82px;top:630.82px;font-size:11.20px;line-height:11.20px;font-weight:400;color:#111111;font-family:'Liberation Sans', sans-serif;transform:scaleX(0.9837);-webkit-text-stroke:0.45px #111111;">19 278,00</div>
<div class="t" style="left:741.00px;top:650.02px;font-size:11.20px;line-height:11.20px;font-weight:400;color:#111111;font-family:'Liberation Sans', sans-serif;transform:scaleX(0.9600);-webkit-text-stroke:0.45px #111111;">96 656,69</div>
<div class="t" style="left:782.00px;top:676.52px;font-size:11.20px;line-height:11.20px;font-weight:400;color:#111111;font-family:'Liberation Sans', sans-serif;transform:scaleX(0.9545);-webkit-text-stroke:0.45px #111111;">0,00</div>
<div class="t" style="left:731.60px;top:696.97px;font-size:12.20px;line-height:12.20px;font-weight:700;color:#1a1a1a;font-family:'Liberation Sans', sans-serif;transform:scaleX(1.0056);">1 078 066,90</div>
<div class="t" style="left:726.00px;top:553.52px;font-size:11.20px;line-height:11.20px;font-weight:400;color:#111111;font-family:'Liberation Sans', sans-serif;transform:scaleX(0.9838);-webkit-text-stroke:0.45px #111111;">835, 67</div>
<div class="t" style="left:759.60px;top:580.95px;font-size:12.00px;line-height:12.00px;font-weight:400;color:#111111;font-family:'Liberation Serif', serif;transform:scaleX(1.0333);-webkit-text-stroke:0.28px #111111;">25 918,2</div>
</body></html>
